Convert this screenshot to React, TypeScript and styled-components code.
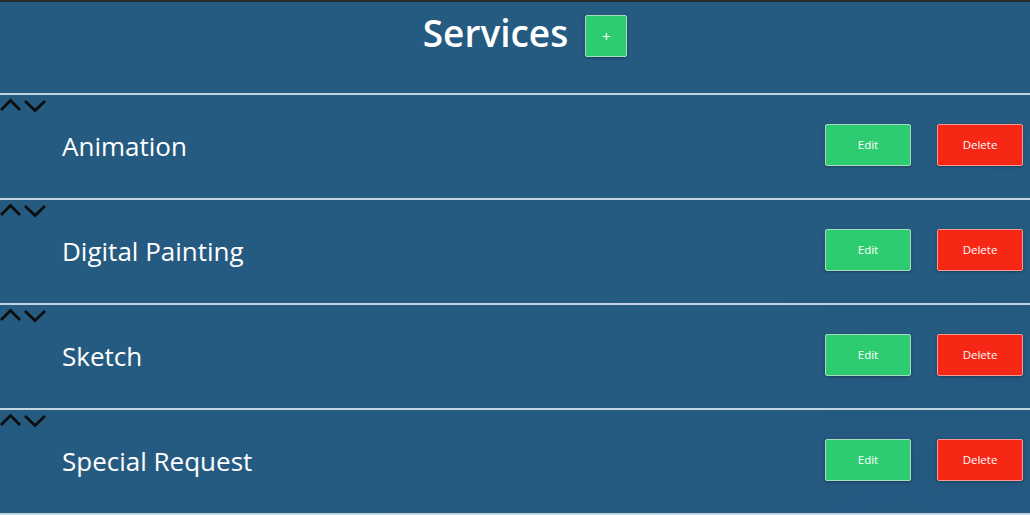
import React from 'react'
import styled, { createGlobalStyle } from 'styled-components'

const services = ['Animation', 'Digital Painting', 'Sketch', 'Special Request']

const GlobalStyle = createGlobalStyle`
	html, body {
		margin: 0;
		padding: 0;
		background: #255a80;
	}
	body {
		font-family: 'Open Sans', 'Noto Sans', sans-serif;
	}
`

const Chevrons = () => (
	<ChevronBox>
		<svg width="48" height="16" viewBox="0 0 48 16">
			<polyline
				points="1,13 10.5,3.5 20,13"
				fill="none"
				stroke="#0d0d0d"
				strokeWidth="2.8"
			/>
			<polyline
				points="25,4 35,13.5 45,4"
				fill="none"
				stroke="#0d0d0d"
				strokeWidth="2.8"
			/>
		</svg>
	</ChevronBox>
)

export default function App(): JSX.Element {
	return (
		<>
			<GlobalStyle />
			<Page>
				<Header>
					<Title>Services</Title>
					<ActionButton $variant="add">+</ActionButton>
				</Header>
				<List>
					{services.map((name) => (
						<Row key={name}>
							<Chevrons />
							<RowBody>
								<RowTitle>{name}</RowTitle>
								<Actions>
									<ActionButton $variant="edit">Edit</ActionButton>
									<ActionButton $variant="delete">Delete</ActionButton>
								</Actions>
							</RowBody>
						</Row>
					))}
				</List>
			</Page>
		</>
	)
}

const Page = styled.div`
	width: 1030px;
	height: 515px;
	overflow: hidden;
	border-top: 2px solid #2b2b2d;
	box-sizing: border-box;
	background: linear-gradient(160deg, #255a81 0%, #265b81 55%, #245880 100%);
`

const Header = styled.div`
	height: 91px;
	display: flex;
	justify-content: center;
	align-items: flex-start;
	gap: 17px;
	padding-top: 11px;
	box-sizing: border-box;
	padding-left: 20px;
`

const Title = styled.h1`
	margin: 0;
	font-size: 37px;
	font-weight: 600;
	line-height: 44px;
	color: #ffffff;
	margin-top: -2px;
`

const List = styled.div`
	display: flex;
	flex-direction: column;
	border-top: 2px solid #c4d5e2;
`

const Row = styled.div`
	height: 103px;
	display: flex;
	flex-direction: column;
	border-bottom: 2px solid #c4d5e2;
`

const ChevronBox = styled.div`
	height: 16px;
	padding-top: 2px;
	line-height: 0;
`

const RowBody = styled.div`
	flex: 1;
	display: flex;
	align-items: center;
	justify-content: space-between;
	padding-left: 62px;
	padding-right: 7px;
	padding-bottom: 20px;
`

const RowTitle = styled.div`
	font-size: 26px;
	color: #ffffff;
	font-weight: 400;
`

const Actions = styled.div`
	display: flex;
	gap: 26px;
	margin-bottom: 2px;
`

const colors = {
	add: '#2ecc71',
	edit: '#2ecc71',
	delete: '#f62715'
}

const ActionButton = styled.button<{ $variant: 'add' | 'edit' | 'delete' }>`
	width: ${(p) => (p.$variant === 'add' ? '42px' : '86px')};
	height: 42px;
	margin-top: ${(p) => (p.$variant === 'add' ? '2px' : '0')};
	background: ${(p) => colors[p.$variant]};
	border: 1px solid ${(p) => (p.$variant === 'delete' ? '#f49a92' : '#a8dcc0')};
	border-radius: 2px;
	box-shadow: 0 1px 3px rgba(0, 0, 0, 0.3);
	color: #ffffff;
	font-family: 'Open Sans', 'Noto Sans', sans-serif;
	font-size: ${(p) => (p.$variant === 'add' ? '15px' : '11.5px')};
	padding: 0;
	cursor: pointer;
`
